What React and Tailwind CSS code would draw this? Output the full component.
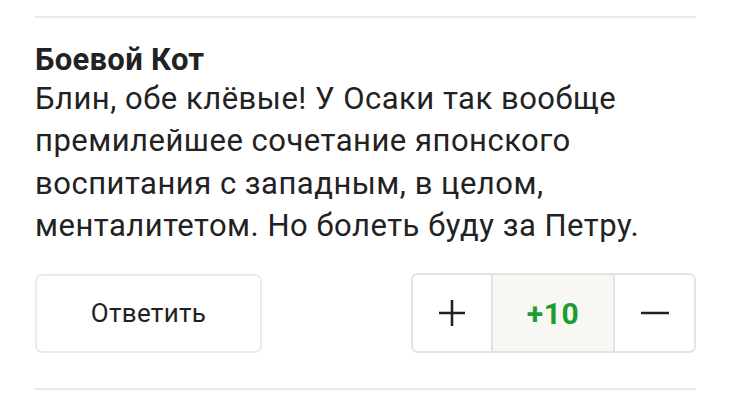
export default function App() {
  return (
    <div className="w-[730px] h-[402px] bg-white overflow-hidden" style={{ fontFamily: 'Roboto, "Noto Sans", sans-serif' }}>
      <div className="pl-[35px] pr-[34px] pt-[16px]">
        <div className="h-[2px] bg-[#ebebe6]" />
        <div className="pt-[25px] text-[31px] leading-[34px] font-bold text-[#222222] tracking-[0.3px]">Боевой Кот</div>
        <p className="mt-[1px] text-[31px] leading-[42.3px] text-[#222222] tracking-[0.5px] whitespace-nowrap">
          Блин, обе клёвые! У Осаки так вообще<br />
          премилейшее сочетание японского<br />
          воспитания с западным, в целом,<br />
          менталитетом. Но болеть буду за Петру.
        </p>
        <div className="mt-[27px] flex justify-between items-start">
          <button className="w-[227px] h-[79px] border-2 border-[#ecece7] rounded-[7px] bg-white text-[26px] tracking-[0.3px] text-[#222222] flex items-center justify-center">
            Ответить
          </button>
          <div className="flex h-[80px] border-2 border-[#e4e4de] rounded-[7px] overflow-hidden -mt-[1px]">
            <button className="w-[78px] flex items-center justify-center bg-white">
              <svg width="28" height="28" viewBox="0 0 28 28">
                <path d="M14 1v26M1 14h26" stroke="#222" strokeWidth="2.6" />
              </svg>
            </button>
            <div className="w-[124px] border-x-2 border-[#e4e4de] bg-[#f7f7f3] flex items-center justify-center text-[30px] tracking-[0.5px] font-bold text-[#1a9e2f]">
              +10
            </div>
            <button className="w-[79px] flex items-center justify-center bg-white">
              <svg width="28" height="4" viewBox="0 0 28 4">
                <path d="M0 2h28" stroke="#222" strokeWidth="2.6" />
              </svg>
            </button>
          </div>
        </div>
        <div className="mt-[35px] h-[2px] bg-[#ebebe6]" />
      </div>
    </div>
  );
}
